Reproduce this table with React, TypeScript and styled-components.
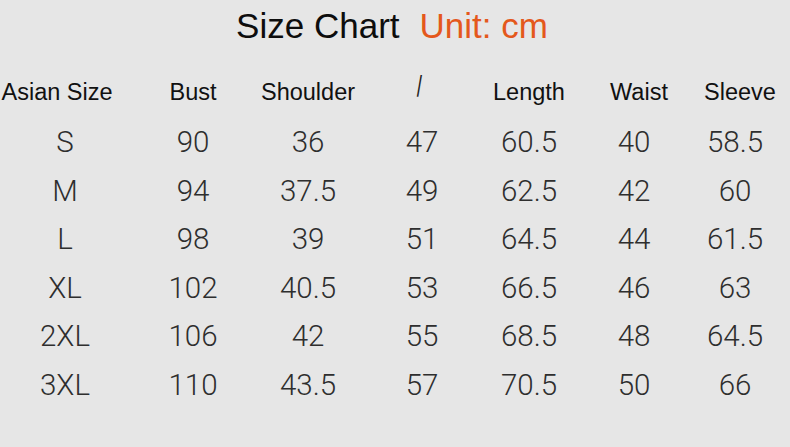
import React from 'react';
import styled, { createGlobalStyle } from 'styled-components';

const GlobalStyle = createGlobalStyle`
  html, body {
    margin: 0;
    padding: 0;
    background: #e6e6e6;
  }
`;

const Page = styled.div`
  width: 790px;
  height: 447px;
  background: #e6e6e6;
  padding-top: 6px;
  box-sizing: border-box;
  overflow: hidden;
`;

const Title = styled.h1`
  margin: 0;
  display: flex;
  justify-content: center;
  gap: 20px;
  font-family: "Liberation Sans", Arial, sans-serif;
  font-weight: 400;
  font-size: 35px;
  line-height: 40px;
  color: #0d0d0d;
  padding-right: 6px;
`;

const Unit = styled.span`
  color: #e4581c;
`;

const Table = styled.div`
  display: grid;
  grid-template-columns: 130px 126px 104px 124px 90px 120px 82px;
  margin-top: 31px;
`;

const Head = styled.div<{ $left?: number; $right?: number }>`
  text-align: center;
  font-family: "Liberation Sans", Arial, sans-serif;
  font-size: 23.5px;
  line-height: 30px;
  color: #111;
  white-space: nowrap;
  padding-left: ${(p) => p.$left ?? 0}px;
  padding-right: ${(p) => p.$right ?? 0}px;
  margin-bottom: 10px;
`;

const Slash = styled.span`
  display: inline-block;
  font-weight: 300;
  font-family: Roboto, "Liberation Sans", sans-serif;
  font-size: 28px;
  line-height: 30px;
  color: #222;
  transform: translateY(-6px) skewX(12deg);
`;

const Cell = styled.div`
  text-align: center;
  font-family: Roboto, "Liberation Sans", sans-serif;
  font-weight: 300;
  font-size: 29.5px;
  line-height: 48.6px;
  color: #2e2e2e;
`;

const headers = [
  { label: 'Asian Size', right: 16 },
  { label: 'Bust' },
  { label: 'Shoulder' },
  { label: '/', right: 4 },
  { label: 'Length' },
  { label: 'Waist', left: 10 },
  { label: 'Sleeve', left: 10 },
];

const rows = [
  ['S', '90', '36', '47', '60.5', '40', '58.5'],
  ['M', '94', '37.5', '49', '62.5', '42', '60'],
  ['L', '98', '39', '51', '64.5', '44', '61.5'],
  ['XL', '102', '40.5', '53', '66.5', '46', '63'],
  ['2XL', '106', '42', '55', '68.5', '48', '64.5'],
  ['3XL', '110', '43.5', '57', '70.5', '50', '66'],
];

export default function App() {
  return (
    <>
      <GlobalStyle />
      <Page>
        <Title>
          <span>Size Chart</span>
          <Unit>Unit: cm</Unit>
        </Title>
        <Table>
          {headers.map((h) => (
            <Head key={h.label} $left={h.left} $right={h.right}>
              {h.label === '/' ? <Slash>/</Slash> : h.label}
            </Head>
          ))}
          {rows.map((r) =>
            r.map((v, i) => <Cell key={r[0] + i}>{v}</Cell>)
          )}
        </Table>
      </Page>
    </>
  );
}
